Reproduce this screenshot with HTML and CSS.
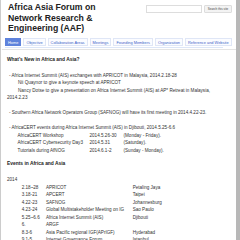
FILE: index.html
```html
<!DOCTYPE html>
<html>
<head>
	<title>Africa Asia Forum on Network Research &amp; Engineering (AAF)</title>
	<link rel="stylesheet" href="styles.css">
</head>
<body>
	<div class="page">
		<div class="header">
			<h1 class="title">Africa Asia Forum on Network Research &amp; Engineering (AAF)</h1>
			<div class="search">
				<input class="search-box" type="text">
				<span class="search-btn">Search this site</span>
			</div>
		</div>

		<div class="nav">
			<span class="tab active">Home</span>
			<span class="tab">Objective</span>
			<span class="tab">Collaboration Areas</span>
			<span class="tab">Meetings</span>
			<span class="tab">Founding Members</span>
			<span class="tab">Organization</span>
			<span class="tab">Reference and Website</span>
		</div>

		<div class="content">
			<h3>What's New in Africa and Asia?</h3>
			<div class="line item">- Africa Internet Summit (AIS) exchanges with APRICOT in Malaysia, 2014.2.18-28</div>
			<div class="line indent">Nii Quaynor to give a keynote speech at APRICOT</div>
			<div class="line indent">Nancy Dotse to give a presentation on Africa Internet Summit (AIS) at AP* Retreat in Malaysia,</div>
			<div class="line">2014.2.23</div>
			<div class="line blank"></div>
			<div class="line item">- Southern Africa Network Operators Group (SAFNOG) will have its first meeting in 2014.4.22-23.</div>
			<div class="line blank"></div>
			<div class="line item">- AfricaCERT events during Africa Internet Summit (AIS) in Djibouti, 2014.5.25-6.6</div>
			<div class="cert">
				<span>AfricaCERT Workshop</span><span>2014.5.26-30</span><span>(Monday - Friday).</span>
				<span>AfricaCERT Cybersecurity Day3</span><span>2014.5.31</span><span>(Saturday).</span>
				<span>Tutorials during AfNOG</span><span>2014.6.1-2</span><span>(Sunday - Monday).</span>
			</div>

			<h3 class="second">Events in Africa and Asia</h3>
			<div class="line">2014</div>
			<div class="events">
				<span>2.18~28</span><span>APRICOT</span><span>Petaling Jaya</span>
				<span>3.18-21</span><span>APCERT</span><span>Taipei</span>
				<span>4.22-23</span><span>SAFNOG</span><span>Johannesburg</span>
				<span>4.23-24</span><span>Global Multistakeholder Meeting on IG</span><span>Sao Paulo</span>
				<span>5.25~6.6</span><span>Africa Internet Summit (AIS)</span><span>Djibouti</span>
				<span>6.</span><span>ARGF</span><span></span>
				<span>8.3-6</span><span>Asia Pacific regional IGF(APrIGF)</span><span>Hyderabad</span>
				<span>9.1-5</span><span>Internet Governance Forum</span><span>Istanbul</span>
			</div>
		</div>
	</div>
</body>
</html>
```

FILE: styles.css
```css
body{
	margin: 0;
	padding: 0;
	background: #fff;
	font-family: "Liberation Sans", Arial, sans-serif;
	color: #333;
	overflow: hidden;
}
.page{
	width: 235px;
	height: 240px;
	border-left: 1px solid #ccc;
	border-right: 4px solid #b8b8b8;
	overflow: hidden;
}

.header{
	display: flex;
	justify-content: space-between;
	padding: 2px 4px 0 7px;
}
.title{
	margin: 0;
	width: 120px;
	font-size: 8.7px;
	line-height: 10.5px;
	font-weight: bold;
	color: #222;
}
.search{
	display: flex;
	gap: 2px;
	margin-top: 3px;
	height: 8px;
}
.search-box{
	box-sizing: border-box;
	width: 56px;
	height: 8px;
	margin: 0;
	padding: 0;
	border: 1px solid #ddd;
}
.search-btn{
	box-sizing: border-box;
	width: 28px;
	height: 8px;
	font-size: 3px;
	line-height: 6px;
	text-align: center;
	color: #444;
	background: #f3f3f3;
	border: 1px solid #ddd;
	border-radius: 1px;
}

.nav{
	display: flex;
	gap: 2px;
	margin: 4px 13px 0 4px;
	padding-bottom: 1px;
	border-bottom: 1px solid #dde6f7;
}
.tab{
	box-sizing: border-box;
	height: 8px;
	padding: 0 2px;
	font-size: 3.9px;
	line-height: 7px;
	color: #3c5fc8;
	background: #fbfcff;
	border: 1px solid #dfe6f6;
	white-space: nowrap;
}
.tab.active{
	background: #5f83dc;
	border-color: #5f83dc;
	color: #fff;
}

.content{
	margin: 1px 0 0 1px;
	padding: 6.5px 0 0 5px;
	border-top: 1px solid #e4e4e4;
	font-size: 4.6px;
}
.content h3{
	margin: 0 0 8.3px;
	font-size: 4.9px;
	line-height: 7.5px;
	color: #222;
}
.content h3.second{
	margin-top: 6px;
}
.line{
	height: 7.5px;
	line-height: 7.5px;
	white-space: nowrap;
}
.item{
	padding-left: 2px;
}
.indent{
	padding-left: 11px;
}

.cert{
	display: grid;
	grid-template-columns: 72px 34px auto;
	padding-left: 10.5px;
	line-height: 7.5px;
	white-space: nowrap;
}

.events{
	display: grid;
	grid-template-columns: 24.3px 86.7px auto;
	padding-left: 14.7px;
	line-height: 7.5px;
	white-space: nowrap;
}
```
